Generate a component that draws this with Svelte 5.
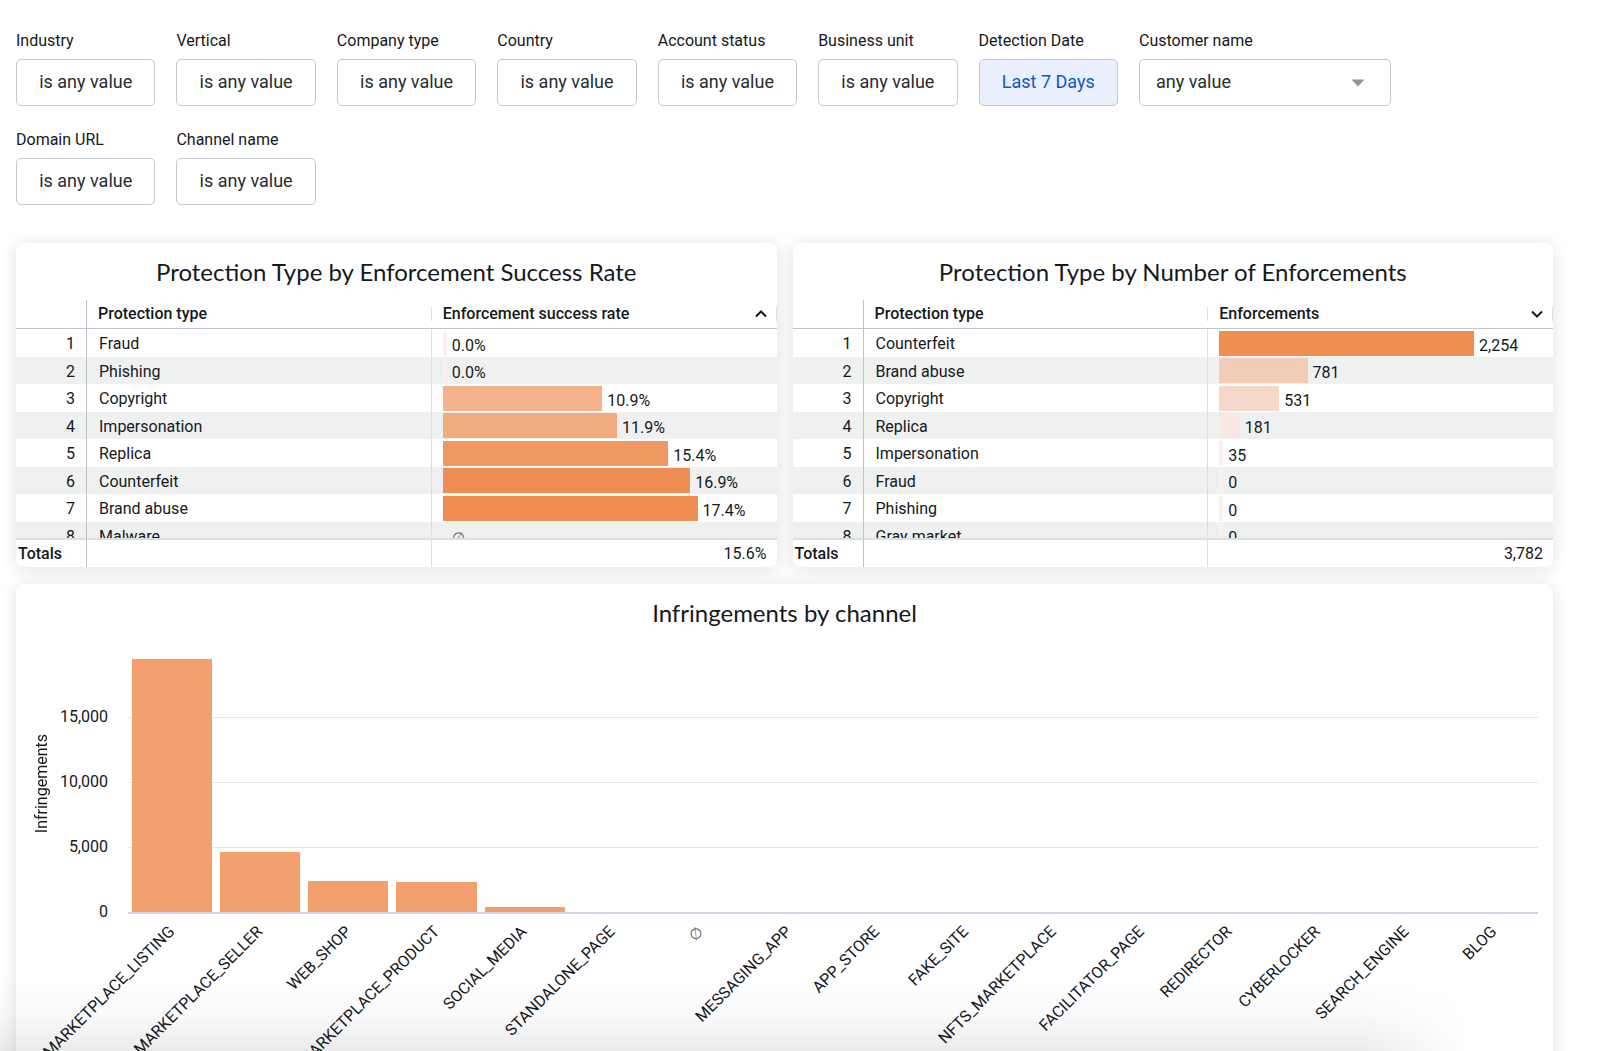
<script>
  const filters = [
    'Industry',
    'Vertical',
    'Company type',
    'Country',
    'Account status',
    'Business unit',
    'Detection Date',
    'Customer name',
    'Domain URL',
    'Channel name'
  ];

  const tables = [
    {
      title: 'Protection Type by Enforcement Success Rate',
      measure: 'Enforcement success rate',
      ascending: true,
      max: 17.4,
      total: '15.6%',
      rows: [
        { name: 'Fraud', value: 0, text: '0.0%', color: '#fcefef' },
        { name: 'Phishing', value: 0, text: '0.0%', color: '#fcefef' },
        { name: 'Copyright', value: 10.9, text: '10.9%', color: '#f3b289' },
        { name: 'Impersonation', value: 11.9, text: '11.9%', color: '#f2ac80' },
        { name: 'Replica', value: 15.4, text: '15.4%', color: '#f09861' },
        { name: 'Counterfeit', value: 16.9, text: '16.9%', color: '#ef8e54' },
        { name: 'Brand abuse', value: 17.4, text: '17.4%', color: '#f08d50' },
        { name: 'Malware', value: null, text: '∅', color: '' }
      ]
    },
    {
      title: 'Protection Type by Number of Enforcements',
      measure: 'Enforcements',
      ascending: false,
      max: 2254,
      total: '3,782',
      rows: [
        { name: 'Counterfeit', value: 2254, text: '2,254', color: '#f08d50' },
        { name: 'Brand abuse', value: 781, text: '781', color: '#f3ccb7' },
        { name: 'Copyright', value: 531, text: '531', color: '#f5d8ca' },
        { name: 'Replica', value: 181, text: '181', color: '#f8e8e3' },
        { name: 'Impersonation', value: 35, text: '35', color: '#fceeec' },
        { name: 'Fraud', value: 0, text: '0', color: '#fcefef' },
        { name: 'Phishing', value: 0, text: '0', color: '#fcefef' },
        { name: 'Gray market', value: 0, text: '0', color: '#fcefef' }
      ]
    }
  ];

  const axisMax = 20000;
  const ticks = ['15,000', '10,000', '5,000', '0'];
  const channels = [
    { name: 'MARKETPLACE_LISTING', value: 19650 },
    { name: 'MARKETPLACE_SELLER', value: 4640 },
    { name: 'WEB_SHOP', value: 2430 },
    { name: 'MARKETPLACE_PRODUCT', value: 2310 },
    { name: 'SOCIAL_MEDIA', value: 400 },
    { name: 'STANDALONE_PAGE', value: 0 },
    { name: '∅', value: 0 },
    { name: 'MESSAGING_APP', value: 0 },
    { name: 'APP_STORE', value: 0 },
    { name: 'FAKE_SITE', value: 0 },
    { name: 'NFTS_MARKETPLACE', value: 0 },
    { name: 'FACILITATOR_PAGE', value: 0 },
    { name: 'REDIRECTOR', value: 0 },
    { name: 'CYBERLOCKER', value: 0 },
    { name: 'SEARCH_ENGINE', value: 0 },
    { name: 'BLOG', value: 0 }
  ];
</script>

<main>
  <section class="filters" aria-label="Filters">
    {#each filters as label, i}
      <div class="filter">
        <label for="filter-{i}">{label}</label>
        {#if label === 'Customer name'}
          <div class="select">
            <select id="filter-{i}"><option>any value</option></select>
            <svg width="14" height="8" viewBox="0 0 14 8" aria-hidden="true"><path d="M0.5 0.5h13L7 7.5z" fill="#939699" /></svg>
          </div>
        {:else}
          <button id="filter-{i}" class:active={label === 'Detection Date'}>
            {label === 'Detection Date' ? 'Last 7 Days' : 'is any value'}
          </button>
        {/if}
      </div>
    {/each}
  </section>

  <div class="tables">
    {#each tables as t}
      <section class="card">
        <h2>{t.title}</h2>
        <div class="scroller">
          <table>
            <thead>
              <tr>
                <th class="index"></th>
                <th class="name">Protection type</th>
                <th class="measure">
                  <div class="heading">
                    <span>{t.measure}</span>
                    <svg width="12" height="8" viewBox="0 0 12 8" aria-hidden="true">
                      <path d={t.ascending ? 'M1 6.5 6 1.5 11 6.5' : 'M1 1.5 6 6.5 11 1.5'} fill="none" stroke="#15191e" stroke-width="2" />
                    </svg>
                  </div>
                </th>
              </tr>
            </thead>
            <tbody>
              {#each t.rows as row, i}
                <tr>
                  <td class="index">{i + 1}</td>
                  <td class="name">{row.name}</td>
                  <td class="measure">
                    <div class="track">
                      <div class="bar" style:width="{((row.value ?? 0) / t.max) * 100}%" style:background={row.color}></div>
                      <span class:empty={row.value === null}>{row.text}</span>
                    </div>
                  </td>
                </tr>
              {/each}
            </tbody>
            <tfoot>
              <tr>
                <th class="index" scope="row">Totals</th>
                <td class="name"></td>
                <td class="measure total">{t.total}</td>
              </tr>
            </tfoot>
          </table>
        </div>
      </section>
    {/each}
  </div>

  <section class="card chart-card">
    <h2>Infringements by channel</h2>
    <div class="chart">
      <div class="axis-title">Infringements</div>
      <div class="ticks">
        {#each ticks as tick}<div>{tick}</div>{/each}
      </div>
      <div class="plot">
        {#each channels as c}
          <div class="slot">
            {#if c.value}<div class="column" style:height="{(c.value / axisMax) * 100}%"></div>{/if}
          </div>
        {/each}
      </div>
      <div class="labels">
        {#each channels as c}
          <div class="slot-label"><span class:empty={c.name === '∅'}>{c.name}</span></div>
        {/each}
      </div>
    </div>
  </section>
  <div class="fade"></div>
</main>

<style>
  :global(body) {
    background: #fff;
  }
  main {
    position: relative;
    box-sizing: border-box;
    height: 100vh;
    overflow: hidden;
    padding: 29px 47px 0 16px;
    color: #15191e;
    font: 16px/24px Roboto, 'Noto Sans', sans-serif;
  }
  .filters {
    display: grid;
    grid-template-columns: repeat(7, 1fr) 252px;
    gap: 22px 21px;
    max-width: 1375px;
    margin-bottom: 38px;
  }
  .filter label {
    display: block;
    height: 30px;
  }
  button,
  select {
    display: block;
    box-sizing: border-box;
    width: 100%;
    height: 47px;
    margin: 0;
    padding: 0 0 1px;
    border: 1px solid #c5c8cd;
    border-radius: 5px;
    background: #fff;
    color: #262d33;
    font: 18px/24px Roboto, 'Noto Sans', sans-serif;
  }
  button.active {
    background: #e9f0fb;
    color: #0f57cb;
  }
  .select {
    display: grid;
    align-items: center;
  }
  .select > * {
    grid-area: 1 / 1;
  }
  .select svg {
    justify-self: end;
    margin-right: 26px;
    pointer-events: none;
  }
  select {
    appearance: none;
    padding-left: 16px;
  }
  .tables {
    display: grid;
    grid-template-columns: 1fr 1fr;
    gap: 16px;
    margin-bottom: 17px;
  }
  .card {
    min-width: 0;
    border-radius: 8px;
    background: #fff;
    box-shadow: 0 2px 18px rgba(0, 0, 0, 0.12);
  }
  h2 {
    margin: 0;
    padding: 13px 0 12px;
    font: 400 24px/32px Lato, Roboto, sans-serif;
    text-align: center;
  }
  .scroller {
    height: 267px;
    overflow: hidden;
    border-radius: 0 0 8px 8px;
  }
  table {
    width: 100%;
    table-layout: fixed;
    border-collapse: separate;
    border-spacing: 0;
    line-height: 20px;
  }
  th,
  td {
    box-sizing: border-box;
    padding: 0;
    text-align: left;
    white-space: nowrap;
  }
  th {
    font-weight: 500;
  }
  .index {
    width: 71px;
    border-right: 1px solid #bfc1cb;
  }
  .name {
    padding-left: 12px;
    border-right: 1px solid #dcdee2;
  }
  thead,
  tfoot {
    position: sticky;
    z-index: 1;
    background: #fff;
  }
  thead {
    top: 0;
  }
  tfoot {
    bottom: 0;
  }
  thead th {
    height: 29px;
    border-bottom: 1px solid #c1c3cf;
  }
  thead .name {
    padding-left: 11px;
    border-right: 0;
  }
  .heading {
    display: flex;
    align-items: center;
    justify-content: space-between;
    height: 14px;
    padding: 0 9px 0 11px;
    border-left: 1px solid #dcdee2;
    border-right: 1px solid #dcdee2;
    margin-left: -1px;
  }
  tbody td {
    height: 28px;
  }
  tbody .index,
  tbody .name {
    padding-top: 2px;
  }
  tbody tr:nth-child(even) td {
    height: 27px;
    background: #eff1f1;
  }
  tbody .index {
    padding-right: 11px;
    text-align: right;
  }
  .track {
    display: flex;
    align-items: center;
    gap: 5px;
    padding: 0 79px 0 11px;
  }
  .bar {
    flex: none;
    min-width: 4px;
    height: 25px;
  }
  .track span {
    padding-top: 5px;
  }
  tfoot th,
  tfoot td {
    height: 29px;
    padding-top: 1px;
    border-top: 2px solid #dcdfe1;
  }
  tfoot .index {
    padding-left: 2px;
  }
  .total {
    padding-right: 10px;
    text-align: right;
  }
  .chart {
    display: grid;
    grid-template-columns: 38px 54px 1fr;
    grid-template-rows: 260px 220px;
    padding: 13px 15px 0 0;
  }
  .axis-title {
    align-self: center;
    justify-self: end;
    writing-mode: vertical-rl;
    transform: rotate(180deg);
  }
  .ticks {
    display: grid;
    grid-template-rows: repeat(4, 65px);
    padding-top: 51px;
    text-align: right;
  }
  .plot {
    display: grid;
    grid-template-columns: repeat(16, 1fr);
    margin-left: 20px;
    border-bottom: 2px solid #d3d6e6;
    background: repeating-linear-gradient(to top, transparent 0 64px, #e6e6e8 64px 65px);
  }
  .slot {
    display: flex;
    align-items: end;
    padding: 0 4px;
  }
  .column {
    flex: 1;
    background: #f3a06e;
  }
  .labels {
    grid-column: 3;
    display: grid;
    grid-template-columns: repeat(16, 1fr);
    margin-left: 20px;
  }
  .slot-label {
    position: relative;
  }
  .slot-label span {
    position: absolute;
    top: 3px;
    right: 50%;
    transform: rotate(-45deg);
    transform-origin: 100% 50%;
    white-space: nowrap;
  }
  .empty {
    color: #5f6368;
    font-size: 15px;
  }
  .fade {
    position: absolute;
    right: 130px;
    bottom: 0;
    left: 0;
    height: 72px;
    background: linear-gradient(transparent, rgba(0, 0, 0, 0.025) 50%, rgba(0, 0, 0, 0.08));
    mask-image: linear-gradient(to left, transparent, #000 110px);
    pointer-events: none;
  }
</style>
